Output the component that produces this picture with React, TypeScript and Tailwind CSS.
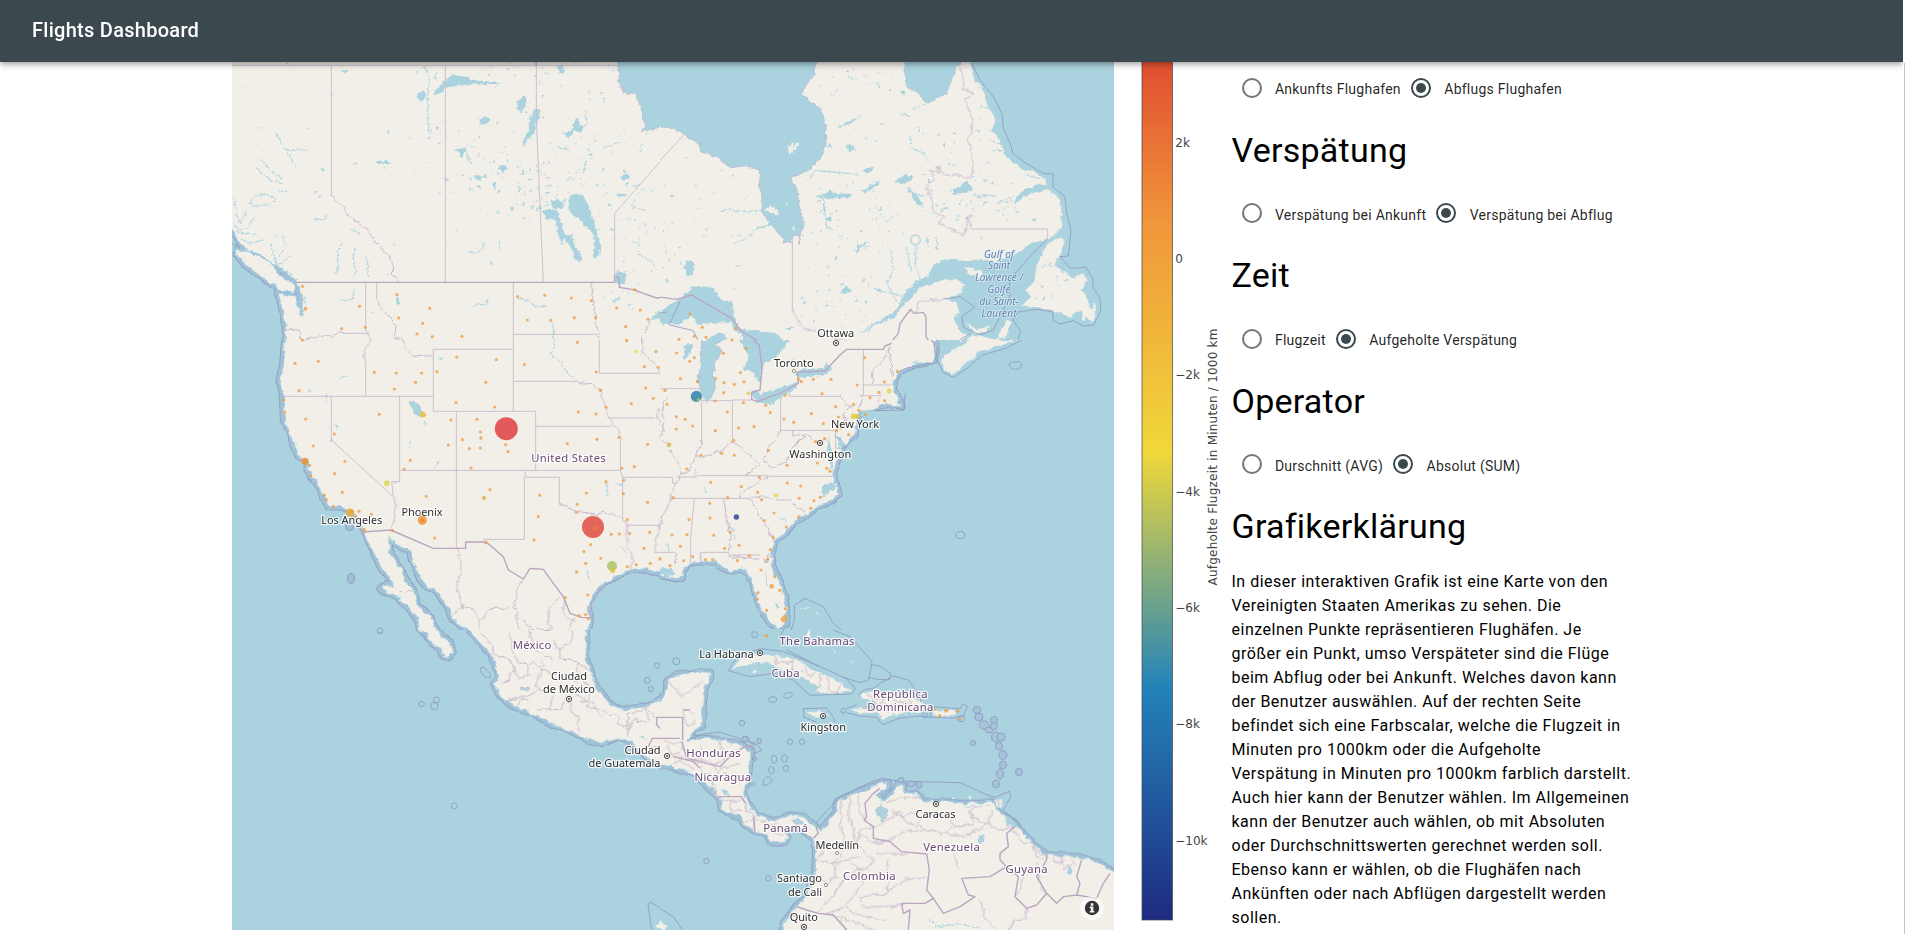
import React from "react";

type Tile = {
  x: number;
  y: number;
  land: string[];
  islands: string[];
  inland: string[];
  lines: string[];
  rivers: string[];
  wobbly: string[];
  straight: string[];
  national: string[];
  dots: string;
};

// The map is split into six tiles, three units per pixel.
const TILES: Tile[] = [
  {
    x: 220, y: 50,
    land: [
      "M-60-60H1400V960H197L197 870 196 830 188 790 180 750 172 728 200 738 228 742 238 790 246 796 248 750 240 725 232 700 215 680 190 660 160 642 120 612 80 600 62 585 50 560 36 540-60 500Z",
      "M50 600L80 602 120 620 150 637 165 655 180 680 210 692 226 710 220 730 190 722 160 705 110 670 70 640 50 615Z",
    ],
    islands: [],
    inland: [
      "M1196-60V60L1200 100 1210 130 1250 130 1256 150 1264 190 1275 222 1268 245 1300 236 1350 228 1400 220V-60Z",
      "M638 138L650 118 672 92 700 74 735 80 765 92 825 95 845 102 800 102 740 104 712 108 680 112 660 130Z",
      "M592 130L612 124 616 140 606 158 594 146Z",
      "M778 212L800 198 812 208 796 222 784 224Z",
      "M890 158L905 140 920 142 916 166 904 188 894 178Z",
      "M928 210L942 178 960 176 958 204 948 222 944 248 930 262 908 288 912 262 926 244Z",
      "M1034 252L1056 236 1068 204 1080 212 1078 232 1100 222 1082 246 1062 244 1046 266Z",
      "M704 298L722 296 738 290 736 308 724 322 718 306Z",
      "M470 336L500 332 514 342 474 342Z",
      "M836 354L850 344 866 354 848 368Z",
      "M760 376L790 378 786 390 764 388Z",
      "M1044 470L1050 436 1068 430 1090 436 1106 470 1118 506 1132 548 1142 580 1138 618 1122 626 1120 590 1126 570 1110 540 1096 528 1080 508 1062 500Z",
      "M990 452L1010 448 1030 462 1026 474 1000 476Z",
      "M966 482L990 476 1012 484 1022 512 1034 556 1056 556 1064 590 1082 612 1084 634 1066 630 1056 600 1046 582 1030 562 1028 584 1012 548 1008 516 990 500 984 514Z",
      "M1200 380L1222 372 1232 380 1210 392Z",
      "M1184 680L1196 664 1220 672 1218 690 1204 708 1186 694Z",
      "M1180 744L1204 740 1196 752 1180 756Z",
      "M1288 812L1308 790 1335 768 1400 750V850L1335 812 1310 806Z",
      "M528 745L538 748 538 764 530 764Z",
      "M360 60L386 60 382 70 368 66Z",
      "M1190 428L1222 434 1206 442 1190 436Z",
      "M1012 50L1028 38 1032 70 1018 72Z",
      "M940 36L955 38 950 52Z",
      "M818 402L828 396 824 420Z",
      "M806 636L820 640 812 646Z",
    ],
    lines: ["M36 580L60 592"],
    rivers: [
      "M165 248L192 292 212 322 228 352M200 302L236 298 260 302",
      "M110 352L135 380 160 394 188 398M122 326L150 362 186 384",
      "M88 460L106 438 138 432 168 446 152 464 110 468 88 460M176 424L200 424",
      "M40 524L60 540 84 530 104 500M46 490L62 520 80 480M50 545L84 552 112 556M60 566L90 580 130 570M40 440L50 480",
      "M165 640L180 660 206 668 232 690M150 580L168 640 190 600M172 648L210 620",
      "M240 726L244 748 238 770 250 786M252 740L258 768M236 790L250 792",
      "M368 578L352 610 355 650 346 672M404 596L400 630 408 660 400 680M438 616L444 660 442 684",
      "M742 606L770 610 798 584M786 578L790 590M838 570V598M746 774L770 762 802 766 800 750",
      "M896 744L930 754 940 768 980 770M1000 818V856L1008 900M404 712L396 750 360 752",
      "M614 46L628 90 622 150 626 250M650 66L640 90M282 506L310 510 320 496",
      "M450 780L462 790M185 556L198 586M390 536L424 552M840 98L820 118M1230 464L1272 480M1150 294L1200 276M1252 612L1296 634",
      "M1050 300L1010 290M1100 330L1090 370M740 310L752 340M1240 576L1262 584",
    ],
    wobbly: [
      "M334 434L345 454 372 470 390 505 420 520 445 545 470 578 496 606 516 632 518 672 536 696",
      "M196 838L235 840 248 870 300 860 370 850",
      "M440 850L455 866 446 890 440 900",
      "M470 745L485 775 525 820 522 866 545 868 560 900",
      "M1115 700L1118 745 1124 780 1128 820 1136 850 1138 900",
      "M1288 812L1280 845 1265 862 1262 900",
      "M199 36L204 44",
    ],
    straight: [
      "M36 46H1196M334 46V434M676 46V697M949 36V210L970 697M1184 697V490L1360 290M437 697V832L440 850H370M470 697V745M880 697V900M880 853H1135M640 898H880",
    ],
    national: ["M230 697H1184V680L1196 682 1198 712 1244 720 1270 730 1310 744 1360 742"],
    dots: "248,709 531,734 419,769 629,775 536,804 608,820 365,836 436,832 591,852 637,860 726,859 247,870 893,740 974,736 1054,744 1114,752 922,810 992,811 1063,803 1127,803 1190,774 1261,780 1244,719 1284,808 1217,830 1220,871 256,776,6",
  },
  {
    x: 660, y: 50,
    land: [],
    islands: [
      "M-60-60H925L930 37 945 80 975 130 978 160 1008 205 998 240 1024 280 1040 320 1080 350 1120 366 1160 385 1165 402 1120 408 1080 430 1060 462 1110 430 1160 418 1180 430 1205 450 1208 480 1205 530 1190 550 1165 566 1120 580 1080 605 1040 625 1000 632 900 630 850 632 820 645 808 680 770 692 740 725 700 790 650 818 620 845 640 826 700 804 735 760 780 715 840 690 890 686 915 700 905 725 860 748 895 760 896 785 886 810 900 840 924 858 905 880 880 900 860 960H-60Z",
      "M1200 560L1215 575 1200 610 1182 650 1215 665 1235 684 1270 672 1285 690 1265 720 1282 738 1296 780 1302 750 1310 790 1295 820 1280 800 1265 822 1262 780 1230 802 1200 790 1150 775 1085 768 1112 740 1095 720 1120 700 1130 650 1150 600 1180 565Z",
      "M912 652L960 660 988 682 960 686 930 672Z",
      "M915 812L950 836 992 828 980 850 940 846Z",
      "M1040 808L1056 815 1040 860 1008 870 1025 830Z",
      "M850 905L900 884 940 852 1000 866 1040 872 1060 860 1040 890 1000 960H840Z",
    ],
    inland: [
      "M-60-60V222L0 228 30 235 72 252 110 280 125 300 170 325 210 350 260 352 302 360 298 400 306 440 302 480 330 520 360 555 375 578 390 580 400 560 418 552 418 580 422 550 430 515 418 470 412 420 398 390 392 382 440 365 480 330 498 290 496 220 480 175 430 135 435 110 460 75 470 37V-60Z",
      "M735-60V60L738 100 745 114 780 130 790 150 806 160 830 145 860 130 878 80 885 60 900 37V-60Z",
      "M-10 800L20 770 60 746 100 710 160 710 180 748 215 755 225 800 236 835 290 842 350 850 370 870 410 910H260L250 860 225 842 215 815 150 820 110 822 100 800 78 806 60 824-10 820Z",
      "M120 880L150 862 175 850 190 850 200 870 180 885 170 910H110Z",
      "M72 650L82 630 100 634 104 660 92 678 76 670Z",
      "M604 366L620 354 646 352 630 366Z",
      "M464 440L500 430 510 418 520 430 576 432 570 442 500 446Z",
      "M604 424L640 400 662 394 650 408 614 430Z",
      "M706 396L730 376 760 378 752 394 724 402Z",
      "M738 410L768 430 790 470 770 460Z",
      "M878 418L900 412 918 392 940 418 920 428 880 432Z",
      "M556 288L580 284 586 298 570 304Z",
      "M640 714L660 714 658 726Z",
      "M530 234L560 216 606 196 570 222Z",
      "M560 78L600 90 566 84Z",
      "M586 612L596 586 626 574 606 590Z",
      "M722 120L740 124 728 136Z",
      "M500 290L508 278 516 292Z",
      "M495 508L512 500 510 516Z",
      "M540 724L560 708 574 722 556 734Z",
      "M376 836L398 832 394 842Z",
      "M26 434L44 436 40 442Z",
    ],
    lines: [
      "M935 40L960 90 1000 140 1026 190 1030 235 1050 280 1060 312 1095 338 1150 370 1180 372 1178 410 1215 440 1220 490 1233 540 1225 618 1200 620 1232 655 1278 652 1300 690 1298 710 1320 745 1322 785 1300 825 1270 828 1240 812 1200 822 1180 812 1178 785 1130 778 1075 786 1058 810 1082 842 1074 868 1040 900",
      "M850 747L900 740 945 772 905 800 910 832 960 855 1000 840 1020 800 1050 740 1048 690 1110 620 1163 565",
      "M30 820L60 755M0 790L20 786M25 824L100 842 118 880M860 896L930 850",
    ],
    rivers: [
      "M180 490L196 478 260 486 300 480M220 580L250 570 300 530 330 526M440 390L470 362 540 368 600 374",
      "M490 460L500 530 520 540M490 446L496 500M750 260L752 290 790 310 806 332M750 180L800 160M720 190L752 200",
      "M768 590L766 640 780 690M740 590L752 660M690 600L700 660 680 700 720 770M650 720L700 732 730 740",
      "M600 850L640 826 690 804M1010 460L1060 440M940 440L1000 436M800 560L806 590M370 70L384 56M772 230L788 252M650 96L660 118M510 134L526 134M830 600V560",
      "M960 170L1000 180M985 240L1030 246M990 270L1040 290M1060 340L1090 350M950 110L970 118M1000 300L1040 304M1090 372L1140 386",
    ],
    wobbly: [
      "M895 37L905 60 912 110 900 118 940 128 915 150 930 190 940 210 925 270 940 330 935 385 880 375 850 370 832 347 838 370 812 360 820 390 798 410 815 450 820 480 850 500 840 520 880 540 912 556 925 500 945 495 925 510 935 537",
      "M397 780L430 835 470 845 500 862 570 872 566 898",
      "M765 785L780 755 850 747",
    ],
    straight: ["M397 560V780M935 537H1163V565M-10 342L74 252"],
    national: ["M-10 740L50 748 95 735 215 805 245 845 290 870 297 900M550 898H670L690 880 715 850 720 820 752 778 762 790 790 787 798 800V860L825 900"],
    dots: "90,792 127,832 228,836 103,859 57,868 138,862 216,870",
  },
  {
    x: 220, y: 340,
    land: [
      "M196-60L195 0 190 60 181 130 192 180 194 240 216 300 238 350 264 362 262 390 285 420 310 470 330 500 365 500 395 515 420 545 432 575 444 605 462 640 490 690 526 740 500 735 482 742 500 758 530 772 566 800 594 840 602 880 620 905 700 905 660 900 650 870 632 830 592 795 580 750 556 720 538 680 512 640 508 590 515 605 570 630 575 660 605 720 620 740 648 750 690 810 698 835 745 875 780 960H1095L1100 900 1110 840 1106 790 1130 745 1190 705 1240 688 1290 690 1330 702 1400 705V-60Z",
    ],
    islands: [],
    inland: [
      "M570 186L582 184 600 202 606 216 616 232 600 226 584 218 576 204Z",
      "M570 186L582 184 600 202 606 216 616 232 600 226 584 218 576 204Z",
      "M332 292L338 298 334 306Z",
      "M346 248L354 258 350 268Z",
      "M612 240L618 248 614 256Z",
      "M264 146L272 150 268 158Z",
      "M590 710L600 712 598 720Z",
      "M656 50L666 54 662 64Z",
    ],
    lines: [],
    rivers: [
      "M1000-10L1004 24 990 40 1020 64 1034 90 1070 124M360 112L380 108M320 160V184M640 384L662 360M570 300V320",
      "M1160 430L1164 470M1190 430L1210 440M1110 520L1130 526M1204 620L1220 640M1100 690L1108 720",
      "M300 536L380 560M400 520L420 540",
    ],
    wobbly: [
      "M446 0L432 50 437 70M545 0L560 30 580 50 610 45 640 50",
      "M1070 124L1085 132 1120 130 1140 150 1155 190 1165 232 1195 270 1201 300",
      "M1018 493L1040 500 1070 515 1120 520 1180 522 1205 535 1222 545V620L1238 650 1230 690",
      "M520 470L530 500 520 550 512 570M530 430L515 430",
      "M1265 0L1270 40 1315 85 1320 110 1345 155 1345 180 1310 220 1322 260 1350 310",
      "M1330 480L1318 560 1308 600 1305 637",
      "M715 625L722 690 710 740 725 800 760 810 780 850 775 900M700 820L735 795M780 845L810 805 885 805 895 850 905 900M885 800L890 750 910 717M905 840L940 870 990 868M1060 835L1040 880 1060 900M1020 770L990 800 985 850 1010 890M1035 775L1030 820 1065 850",
      "M920 900L930 870 980 880 1000 900M538 755H578",
      "M1110 832L1118 780 1150 742",
    ],
    straight: [
      "M190 169H640M437 70V169M640 28V214M640 28H880M880-10V214M640 214H947V391M709 214V625M539 169V425H515L520 470M539 391H1201M880 124H1070M947 259H1175M1201 300V391M334 169V300L520 470M916 391V412H1018V493M913 412V598H790M1201 391L1208 412V535M1205 412H1330M1222 556H1320M1165 234H1305M1138 0V100H1320M1305 637H1350",
    ],
    national: ["M430 576L512 570 640 625H737V606H790L806 612 850 650 865 690 910 717 930 685 970 688 1000 730 1030 770 1050 820 1085 832 1120 833"],
    dots: "225,70 295,64 463,97 529,99 605,99 587,127 651,95 710,51 829,59 797,127 523,147 237,152 191,180 194,216 257,237 478,223 343,282 280,318 708,188 824,201 693,240 771,238 781,276 783,294,5 727,299 748,326 781,324 685,315 857,314 864,335 753,384 571,361 553,387 375,364 269,376 272,408 344,401 367,457 313,465 319,479 340,499 417,514 454,523 408,530 432,570,6 518,572 619,469 810,449 792,474,6 959,466 955,530 942,600 798,606 644,594 913,74 1072,7 1220,2 1308,35 1315,82 1273,80 1129,96 1141,151 1158,202 1128,222 1075,216 1131,298 1042,311 1277,144 1300,175 1234,191 1335,151 1197,292 1283,313 1205,385 1243,380 1211,421 1158,425 1210,461 1099,459 1072,493 1069,517 1283,487 1222,539 1289,577 1229,580 1198,582 1174,583 1112,614 1272,625 1142,655 1092,635 1097,670,5 1070,696,5 1222,680 1249,674 1291,670 1319,657 1036,773 1103,765 1077,827 1097,824 1105,836 995,351 1105,364",
  },
  {
    x: 660, y: 340,
    land: [
      "M-60-60H850L822 0 828 30 820 64 760 75 715 98 704 120 698 150 712 165 718 185 722 200 700 196 680 192 640 205 590 225 592 250 580 285 556 312 540 295 524 285 545 330 528 370 518 400 530 440 536 462 500 490 470 500 440 525 412 535 378 575 345 600 334 640 334 670 355 720 372 765 378 800 376 850 356 866 332 850 300 800 288 770 280 730 265 700 240 685 210 695 190 680 165 665 110 665 85 672 68 690 70 710 50 716 0 705-60 700Z",
    ],
    islands: [
      "M840 60L870 30 920 10 960-60H1110L1080 0 1040 12 960 38 915 75 878 106 852 90Z",
    ],
    inland: [
      "M128-10L122 60 116 120 122 160 138 184 156 178 166 140 160 100 168 60 184 30 170 14 200-10Z",
      "M225-20L250 20 268 55 250 90 278 96 285 112 300 128 312 70 350 50 374 20 400-20Z",
      "M270 152L290 150 300 162 340 150 400 130 420 122 405 145 365 172 330 196 290 186Z",
      "M405 100L430 86 490 84 500 66 518 82 500 102 450 110 415 112Z",
      "M498 250L506 290 502 330 512 380 506 390 520 384 512 320Z",
      "M482 440L520 428 530 444 500 460 488 474Z",
      "M532 292L552 312 540 330Z",
      "M595 232L640 222 690 205 650 212 612 214Z",
      "M346 792L354 788 358 800 350 804Z",
      "M72 14L100 12 84 50 70 60Z",
      "M755 66L775 64 765 74Z",
      "M-10 690L20 680 50 700 20 712Z",
    ],
    lines: [
      "M832 60L848 96 880 112 925 82 965 46 1040 24 1085 0M827 60L832 20",
      "M710 98L740 84 820 68M735 160L732 210 640 212",
      "M403 796L435 775 490 800 520 850 570 892M403 796V840L385 895 315 895 300 880 330 876M888 585A13 11 0 1 1 914 585A13 11 0 1 1 888 585M1048 76C1050 60 1064 68 1070 66C1084 60 1090 76 1080 84C1068 92 1050 88 1048 76M273 884A10 9 0 1 1 293 884A10 9 0 1 1 273 884",
    ],
    rivers: [
      "M355 530L380 546M104 385L106 410M316 695L322 740M130 440L140 460M400 60L402 54",
      "M20 610L30 640M120 640L126 664M216 560L226 600",
    ],
    wobbly: [
      "M125 300L110 350 122 352 180 335 217 305 240 320 300 372 260 405M60 395L75 400 100 365 108 350",
      "M362 270L345 300 320 330 310 365 340 382 375 365 400 320 440 280 400 290 397 272M440 280L465 305",
      "M540 168L575 205M570 200L550 222 560 250 530 271",
      "M325 409L290 430 250 450 232 475M265 480L300 468 350 480M395 485L435 525M270 480L310 540 340 600",
      "M190 475L200 530 210 590 205 640M310 655L316 668 322 645 332 650",
      "M20 170L5 215 15 250 0 290 30 330 55 370 65 392 55 420 40 440 35 475 10 520 0 570",
      "M690 28L670 60 640 90 635 135M690 20L697 110M658 167V190M603 167L600 210",
      "M300 655L205 650M45 637L50 665",
    ],
    straight: [
      "M0 146H138M125 182V300M125 182H217M217 182V305M217 180H275M362 170V271M362 271H530M388 150V169H540M527 271V325H548M110 407H322V418M50 411H110M325 409H520M40 475H270M350 480H395M103 475L92 590V668M0 637H45M122 668V637H205M205 645H300M610 28V165M610 135H695M600 167H665M0 411L38 413V430H52",
    ],
    national: ["M280 0L297 14 306 80 300 150 275 158 275 178 290 185 360 160 415 130 412 96 495 93 540 45 560 28H670L675 18 695 10M805-10L822 10 826 40"],
    dots: "50,39 103,53 89,64 190,40 258,25 241,98 167,116 192,128 223,133 252,125 191,158 61,116 112,125 15,151 21,193 165,183 250,188 317,196 331,218 202,216 49,230 76,238 98,258 49,267 166,272 236,264 282,260 372,237 401,247 454,221 490,251 527,200 581,193 486,161 513,118 460,118 424,125 416,118,5 375,166 592,135 614,53 712,93 673,126 657,157 674,182 630,173 596,211 616,224 535,231 556,248 543,264 530,272 566,284 494,296,5 467,305,5 221,301 185,340 223,346 123,346 325,331 381,376 472,369 500,385 510,394 80,387 152,427 298,412 244,440 293,457 305,479 382,429 422,438 418,475 462,482 481,472 452,505 417,530 342,519 313,542 203,473 40,473 149,490 150,534 87,539 36,585 81,584 161,586 211,577 379,561 340,593 331,629 237,616 194,625 268,647 323,658 232,662 61,619 71,662 98,650 136,659 158,659 0,656 30,677 303,690 344,710 359,751 294,758 292,778 320,811 376,806 335,739,7 371,838,9 375,830,6 319,887",
  },
  {
    x: 220, y: 630,
    land: [
      "M745-60L748 0 775 30 812 70 826 105 836 140 822 160 838 195 880 228 940 252 1000 284 1060 308 1100 328 1145 340 1190 322 1230 334 1270 372 1320 404 1400 410V90L1350 130 1338 165 1328 205 1280 230 1210 240 1165 220 1130 175 1115 130 1098 90V-60Z",
      "M560-60L600 0 620 12 640 42 664 56 670 78 684 82 698 66 690 40 664 20 655 0 650-60Z",
    ],
    islands: ["M1306 884L1320 876 1326 892 1312 898Z", "M1340 860L1346 872 1338 870Z"],
    inland: [
      "M900 174L928 176 920 184Z",
      "M900 174L928 176 920 184Z",
      "M1258 320L1270 318 1282 330Z",
    ],
    lines: [
      "M1296 910L1284 822 1292 816 1360 860M472 3A8 8 0 1 0 488 3M597 222A8 8 0 1 1 613 222A8 8 0 1 1 597 222M632 228A11 11 0 1 1 654 228A11 11 0 1 1 632 228M640 210A9 9 0 1 1 658 210A9 9 0 1 1 640 210M694 528A9 9 0 1 1 712 528A9 9 0 1 1 694 528M782 116C786 106 796 114 810 130C816 146 802 146 792 138C784 130 780 122 782 116",
      "M1303 107A8 8 0 1 1 1319 107A8 8 0 1 1 1303 107M1273 151A9 9 0 1 1 1291 151A9 9 0 1 1 1273 151M1284 177A8 8 0 1 1 1300 177A8 8 0 1 1 1284 177",
    ],
    rivers: ["M1130 244L1150 262"],
    wobbly: [
      "M780 10L805 30 825 75 870 90 880 120 865 150 838 158M870 0L875 60 900 100 925 105 940 95 965 120 1000 130 1040 130M925 0L945 60 990 80 1000 95M960 90L972 105 965 120 945 170 960 180 1000 190 990 235",
      "M1060 0L1055 40 1015 60 1020 85 1075 97 1105 120M1000 30L1015 60M880 120L900 145 925 135 920 108M865 215L890 205 925 195 960 180M890 230L905 205 925 210M950 240L990 235 1020 240 1032 220 1048 220 1060 250 1080 260 1070 285 1082 310",
      "M1075 97L1070 130 1090 150 1110 180 1100 230 1140 240 1190 260 1195 285 1225 285 1220 250M1100 230L1115 215 1130 240M1220 250L1260 245 1285 232M1225 285L1222 322M1225 300L1245 262 1255 275 1290 270 1275 235M1040 130L1046 150 1075 160M1060 195L1080 195 1098 210 1080 215M1285 240L1310 262",
    ],
    straight: ["M1330 330V404M1300 350H1350"],
    national: ["M1350 262H1310V285L1345 320 1340 325H1297L1285 350"],
    dots: "",
  },
  {
    x: 660, y: 630,
    land: [
      "M-60 260L0 218 16 190 22 150 50 136 120 125 150 128 142 160 130 185 128 240 124 288 100 300 82 332 140 325 190 333 245 345 275 366 268 400 264 440 250 490 265 522 290 555 340 574 390 556 430 560 465 592 485 606 505 575 530 545 536 512 580 495 620 480 660 458 682 460 680 475 650 492 665 520 700 490 712 465 730 465 730 488 770 490 790 515 850 515 910 522 1000 518 1010 540 1040 560 1068 590 1115 632 1110 640 1160 675 1250 680 1310 695 1362 730 1460 780V960H355L370 880 410 830 440 800 465 740 468 660 458 625 430 602 410 590 370 600 385 620 375 636 330 634 320 612 285 602 250 580 245 560 185 540 180 505 140 465 100 430 40 410-60 400Z",
    ],
    islands: [
      "M820 240L885 238 886 254 850 260 818 256Z",
      "M436 246L480 240 508 254 495 266 460 262Z",
      "M215 115L240 86 290 72 360 75 420 95 450 115 500 135 550 165 580 184 520 192 460 188 480 172 440 150 400 140 350 108 300 98 240 110Z",
      "M600 192L640 182 700 185 760 200 800 225 814 240 750 250 690 255 670 276 655 250 600 250 565 240 600 230 650 238 640 215 602 202Z",
      "M272 120L290 114 290 128 276 128Z",
      "M432 26L446 0 452 24Z",
      "M915 530L920 518 1000 514 990 526Z",
      "M1006 510L1024 506 1026 534 1008 532Z",
      "M600 158L616 140 606 152Z",
      "M0 870L20 888 10 904-5 890Z",
    ],
    inland: [
      "M652 538L662 524 676 534 684 552 668 572 654 556Z",
      "M956 618L974 612 972 634 958 642Z",
      "M182 474L206 488 208 500 190 490Z",
      "M1224 712L1236 706 1234 734 1224 734Z",
      "M1035 555L1060 575 1070 592 1040 585Z",
      "M395 570L420 566 440 585 400 580Z",
    ],
    lines: [
      "M205 122L235 78 300 56 370 64 480 110 560 146 586 176 575 192 450 196 400 150 340 130 270 140 205 122",
      "M372 0L356 22M480 110L380 60M520 0L570 20 636 94 626 150 600 158 550 142M632 104L660 108 692 130 688 150 650 148 626 142",
      "M595 195L615 178 640 176 660 160 700 138 745 150 782 200 782 215M560 236L590 224M560 248L600 258 650 262 668 284 720 264 780 258 812 262 880 264 912 256 922 228 908 222 900 236 812 230 812 262M430 236L500 234 520 262 524 276M430 236L432 262 470 276",
      "M90 328L130 312 180 306 240 326 290 344 306 360 280 372M262 320L275 340 285 336M470 576L540 500 620 462 665 445 710 452 740 454 900 458 985 496 1005 502 1048 484 1052 500 1030 540 1080 584",
      "M-10 830L40 860 70 905",
      "M39 94A10 11 0 1 1 59 94A10 11 0 1 1 39 94M325 209C325 198 350 198 350 208C350 220 325 220 325 209M371 198C372 188 394 182 397 194C396 204 372 210 371 198M238 279A8 8 0 1 1 254 279A8 8 0 1 1 238 279M382 335A8 8 0 1 1 398 335A8 8 0 1 1 382 335M418 335A8 8 0 1 1 434 335A8 8 0 1 1 418 335",
      "M334 388A8 12 0 1 1 350 388A8 12 0 1 1 334 388M365 386A9 11 0 1 1 383 386A9 11 0 1 1 365 386M326 420A8 11 0 1 1 342 420A8 11 0 1 1 326 420M370 415A8 9 0 1 1 386 415A8 9 0 1 1 370 415M310 456C312 440 328 436 336 448C338 458 320 468 310 466ZM272 462A6 6 0 1 1 284 462A6 6 0 1 1 272 462M280 386A5 5 0 1 1 290 386A5 5 0 1 1 280 386",
      "M131 693A8 8 0 1 1 147 693A8 8 0 1 1 131 693M317 745A8 8 0 1 1 333 745A8 8 0 1 1 317 745M275 14A9 9 0 1 1 293 14A9 9 0 1 1 275 14M543 242A7 7 0 1 1 557 242A7 7 0 1 1 543 242M786 256A8 7 0 1 1 802 256A8 7 0 1 1 786 256M891 267A12 8 0 1 1 915 267A12 8 0 1 1 891 267",
    ],
    rivers: ["M800 860L830 890 900 882 960 895M150 450L170 470"],
    wobbly: [
      "M25 155L66 200 130 155M68 240L80 290 110 270M90 240L100 255",
      "M10 330L40 345 60 335M20 350L45 380 70 385M30 370L60 372M60 330L68 360 105 382 140 390 160 405 190 390 215 375 250 350M120 340L130 365 150 375M180 335L185 360 215 375M205 330L215 345M100 395L125 400M40 400L60 390 75 400 100 420M125 405L130 430 165 440M160 405L180 440 200 430M175 420L240 400",
      "M155 470L170 500 210 515 245 510M210 515L215 545 245 540M250 510L262 540 285 560 280 600M255 575L280 570M290 570L320 575 330 590 350 580M340 610L370 615M395 560L420 590",
      "M545 510L540 580 555 620 540 680 520 700M570 500L565 560 585 600 580 660M595 495L600 540 615 570M640 590L600 600 590 640 620 670 640 690 625 720 590 715 570 740 545 760 520 800M530 640L560 660 600 650M520 700L560 690 600 680M570 700L600 720 610 760 580 800 540 840 500 850M480 690L520 700 530 740 500 760 480 740M500 640L480 680 470 690M560 740L530 780 500 820 470 850",
      "M680 520L720 500 750 505 780 500M690 545L730 560 790 540M640 590L680 570 720 545 740 580 770 590M770 580L800 550 860 555 885 590 850 610 790 600 770 580M640 640L690 630 740 600 790 605M850 610L920 620 985 580M885 590L940 580 930 540 960 530M930 560L985 585 1020 600 1065 590M985 580L1000 540",
      "M650 670L720 672 740 668M685 690V790L600 800 610 830 700 830 740 820M685 785L740 745 800 745M860 640L900 720M510 850L560 870 600 880 640 900M540 870L560 900M560 830L600 860 680 870M960 810L975 860 1010 900M1050 905L1060 870H1100V835M640 640L600 610",
      "M1060 600L1090 640 1115 640M1115 640L1130 680 1150 690M1120 650L1140 670 1165 680M1180 680L1185 700 1215 690M1205 680L1210 720 1240 700M1230 685L1250 700M1090 740L1070 800M1130 700L1140 760 1160 800",
      "M340 70L350 100 400 95M400 90L395 130 430 125M430 110L450 140 470 130M480 130L480 170M500 140L510 180 540 190M540 160L530 190M620 190L640 210 660 205M665 190L670 220 720 230M690 188L700 210 740 215 750 245M720 195L740 190 760 240M600 235L640 230M660 215L680 245M1016 510V530",
    ],
    straight: [],
    national: [
      "M0 262H68V330M68 240L90 240M0 325H60M66 335L80 385 105 390 140 400 180 410 215 375 255 350 285 345M40 380L100 395 120 415",
      "M175 500H245L255 520M280 560L285 605M468 590L475 610 460 625",
      "M660 475L640 490 615 520 620 560 612 570 640 590 640 625 690 635 725 665 800 672 808 720 800 780 820 805",
      "M905 745L990 740 1040 710 1020 690 1020 670 1045 650 1040 610 1065 590M1040 710L1075 740 1065 800 1100 835 1130 825 1160 790 1130 740 1160 690V675M1160 790L1190 820 1210 800 1250 795 1260 760 1250 740 1265 690M1250 795L1310 805 1330 760 1350 730",
      "M905 745L925 795 945 800 900 830 850 850 820 805 795 820 725 820 730 850 750 840 745 900M410 830L440 840 475 850 520 855 560 900M380 850L410 860",
    ],
    dots: "319,17 839,257 858,242,6 893,244,5 900,267 822,238",
  },
];

// Hot spots: x, y, radius in pixels and fill.
const BUBBLES: [number, number, number, string][] = [
  [506.3, 428.7, 11.5, "#df3f41"],
  [593, 527, 11, "#e14b41"],
  [595, 528, 2.6, "#ec7740"],
  [305, 461.3, 3.6, "#ee9038"],
  [350, 512.6, 4.2, "#efae36"],
  [352, 511, 1.6, "#e0a030"],
  [422.3, 520.2, 4.6, "#f0943c"],
  [422.3, 520.2, 1.8, "#ea8434"],
  [386.8, 483.3, 3, "#dcd959"],
  [422.8, 414.6, 3, "#eec23c"],
  [612, 566, 5, "#a9c663"],
  [612.6, 570.8, 2.4, "#eebb3a"],
  [696.4, 396.4, 5.6, "#2a82ad"],
  [698.5, 399.7, 1.8, "#b3c457"],
  [736.4, 517, 2.7, "#33458f"],
  [889, 391, 2.4, "#e4d24a"],
  [853.6, 416.3, 2.9, "#e6c93c"],
  [857, 416.3, 2.4, "#e6c93c"],
  [776, 495.6, 2.1, "#ead24a"],
  [748.4, 393.3, 1.9, "#dfd34e"],
  [669, 444.7, 2.3, "#ddb54a"],
  [636.4, 351.3, 1.9, "#e8df5a"],
];

type Label = [string, number, number, number, "c" | "n" | "s"];
const LABELS: Label[] = [
  ["Ottawa", 835.7, 337, 37, "c"],
  ["Toronto", 793.8, 367, 39.5, "c"],
  ["New York", 855, 428, 48, "c"],
  ["Washington", 820.3, 457.6, 62, "c"],
  ["Los Angeles", 351.8, 524, 61, "c"],
  ["Phoenix", 422, 516, 41, "c"],
  ["United States", 568.5, 462, 74.5, "n"],
  ["México", 532, 648.5, 38.5, "n"],
  ["Ciudad", 569, 679.5, 36, "c"],
  ["de México", 569, 693, 52, "c"],
  ["Ciudad", 642.5, 753.6, 36, "c"],
  ["de Guatemala", 624.5, 767, 72, "c"],
  ["La Habana", 726.5, 657.8, 54.5, "c"],
  ["The Bahamas", 817, 645, 75, "n"],
  ["Cuba", 785.5, 677, 28, "n"],
  ["República", 900.3, 698, 54.5, "n"],
  ["Dominicana", 900.3, 711.3, 66, "n"],
  ["Kingston", 823.2, 731, 45.5, "c"],
  ["Honduras", 713.5, 757.3, 54.5, "n"],
  ["Nicaragua", 722.8, 780.8, 56.5, "n"],
  ["Panamá", 785.5, 832, 44.5, "n"],
  ["Caracas", 935.6, 818.3, 40, "c"],
  ["Medellín", 837.3, 849, 43.5, "c"],
  ["Venezuela", 951.5, 851.4, 56.5, "n"],
  ["Colombia", 869.3, 880, 52.5, "n"],
  ["Guyana", 1026.5, 872.7, 42, "n"],
  ["Santiago", 799.5, 882.4, 45, "c"],
  ["de Cali", 805, 895.5, 34, "c"],
  ["Quito", 803.8, 920.7, 28, "c"],
  ["Gulf of", 999, 257.5, 30, "s"],
  ["Saint", 999, 269.3, 22, "s"],
  ["Lawrence /", 999, 281.4, 48, "s"],
  ["Golfe", 999, 293.4, 23, "s"],
  ["du Saint-", 999, 305.4, 39, "s"],
  ["Laurent", 999, 317.4, 35, "s"],
];

const CAPITALS = [
  [836, 343], [820, 443], [569, 699], [667, 756], [760, 653], [823, 716], [936, 804], [804, 927],
];
const TOWNS = [[794, 371], [837, 853], [826, 885]];

// Small lakes are scattered over the lake districts: x, y, width, height, count.
const DISTRICTS = [
  [440, 110, 90, 90, 50], [480, 160, 70, 60, 60], [535, 70, 60, 120, 50], [590, 130, 60, 110, 44],
  [350, 120, 100, 60, 16], [240, 70, 200, 80, 10], [615, 170, 60, 120, 50], [670, 190, 90, 100, 26],
  [675, 145, 70, 60, 12], [810, 65, 90, 90, 24], [815, 170, 110, 70, 50], [920, 130, 60, 90, 36],
  [925, 190, 60, 50, 30], [800, 230, 100, 80, 50], [800, 300, 70, 35, 20], [975, 120, 30, 90, 26],
  [980, 180, 60, 40, 26], [600, 270, 40, 40, 18], [240, 150, 100, 90, 10], [360, 190, 140, 90, 10],
  [1035, 260, 40, 40, 20], [540, 170, 45, 35, 26], [600, 62, 15, 40, 10], [480, 62, 100, 14, 18],
];
const lakes = (() => {
  let seed = 7;
  const rnd = () => {
    seed = (seed * 16807) % 2147483647;
    return seed / 2147483647;
  };
  return DISTRICTS.flatMap(([x, y, w, h, n]) =>
    Array.from({ length: n }, () => ({
      cx: x + rnd() * w,
      cy: y + rnd() * h,
      rx: 0.4 + rnd() * rnd() * 2.2,
      ry: 0.35 + rnd() * 0.7,
      a: -70 + rnd() * 90,
    })),
  );
})();

const ANTILLES = [
  [977, 710, 4, 3.5], [979, 717, 4, 4], [984, 725, 5, 4], [989, 730, 4, 3], [994, 720, 3.5, 3.5], [994, 726, 3.5, 3.5],
  [996, 737, 4.5, 5], [1001, 737, 4, 4], [999, 746, 3.5, 4], [1003, 755, 4, 4.5], [1003, 765, 3.5, 4],
  [1000, 774, 3.4, 5], [996, 784, 3.5, 4], [1019, 772, 3.4, 4], [973, 743, 2.6, 2.6], [901, 780, 3, 2.6],
  [911, 784, 4, 3], [919, 785, 3, 3.4], [745, 739, 3, 3], [759, 741, 2.4, 2.6],
];

const tileSvg = (t: Tile, i: number, children: React.ReactNode) => (
  <svg key={i} x={t.x} y={t.y} width={440 + (t.x > 600 ? 20 : 0)} height={t.y > 600 ? 304 : 290}
    viewBox={`0 0 ${1320 + (t.x > 600 ? 60 : 0)} ${t.y > 600 ? 912 : 870}`}>
    {children}
  </svg>
);

function FlightMap() {
  return (
    <svg className="block h-[868px] w-[882px] shrink-0 bg-[#aad3df]" viewBox="232 62 882 868">
      <defs>
        <filter id="rough" filterUnits="userSpaceOnUse" x="222" y="52" width="902" height="888" colorInterpolationFilters="sRGB">
          <feTurbulence type="fractalNoise" baseFrequency="0.14" numOctaves="3" seed="4" result="n" />
          <feDisplacementMap in="SourceGraphic" in2="n" scale="6" xChannelSelector="R" yChannelSelector="G" />
        </filter>
        <filter id="gentle" filterUnits="userSpaceOnUse" x="222" y="52" width="902" height="888" colorInterpolationFilters="sRGB">
          <feTurbulence type="fractalNoise" baseFrequency="0.07" numOctaves="1" seed="4" result="n" />
          <feDisplacementMap in="SourceGraphic" in2="n" scale="5" xChannelSelector="R" yChannelSelector="G" />
        </filter>
        <filter id="rougher" filterUnits="userSpaceOnUse" x="222" y="52" width="902" height="888" colorInterpolationFilters="sRGB">
          <feTurbulence type="fractalNoise" baseFrequency="0.3" numOctaves="2" seed="9" result="n" />
          <feDisplacementMap in="SourceGraphic" in2="n" scale="5" xChannelSelector="R" yChannelSelector="G" />
        </filter>
      </defs>
      <g filter="url(#gentle)" strokeLinejoin="round" fill="none">
        {TILES.map((t, i) => tileSvg(t, i, (
          <>
            {t.land.map((d) => <path key={"a" + d} d={d} stroke="#9299bf" strokeWidth="23" />)}
            {t.land.map((d) => <path key={"b" + d} d={d} stroke="#a0c2d8" strokeWidth="18" />)}
          </>
        )))}
      </g>
      <g filter="url(#rough)" strokeLinejoin="round" fill="none">
        {TILES.map((t, i) => tileSvg(t, i, (
          <>
            {t.land.concat(t.islands).map((d) => <path key={d} d={d} fill="#f2efe9" stroke="#a8d0de" strokeWidth="2" />)}
            {t.inland.slice(0, i === 1 ? 2 : 1).map((d) => <path key={d} d={d} fill="#aad3df" stroke="#b7b3cd" strokeWidth="2" />)}
          </>
        )))}
      </g>
      <g filter="url(#rougher)" fill="#aad3df">
        {TILES.map((t, i) => tileSvg(t, i, (
          <>
            {t.inland.slice(1).map((d) => <path key={d} d={d} />)}
            {t.rivers.map((d) => <path key={d} d={d} fill="none" stroke="#aad3df" strokeWidth="3" />)}
          </>
        )))}
        {lakes.map((l, i) => (
          <ellipse key={i} cx={l.cx} cy={l.cy} rx={l.rx} ry={l.ry} transform={`rotate(${l.a} ${l.cx} ${l.cy})`} />
        ))}
        <g fill="#f2efe9">
          <path d="M764 209l6-3 6 2 3 7-6-1zM787 150l5-8 2 2-3 6 6-8 3 1-6 9-4 2zM785 205l2-2 1 3zM792 228l3-1-1 3zM790 121l2 4zM784 75l4-6z" />
          <path d="M800 609l10-2v1l-10 2zM815 610l4 5-1 1zM840 649l6 5M850 662l6-2-4 3zM832 648l4 4-1 1zM951 798h4v1h-4zM968 797l4-2-2 4z" />
        </g>
      </g>
      <g filter="url(#rough)" fill="none" strokeLinejoin="round">
        {TILES.map((t, i) => tileSvg(t, i, (
          <>
            {t.wobbly.map((d) => <path key={d} d={d} stroke="#c6b4c8" strokeWidth="2.8" />)}
          </>
        )))}
      </g>
      <g fill="none" strokeLinejoin="round">
        {TILES.map((t, i) => tileSvg(t, i, (
          <>
            {t.lines.map((d) => <path key={d} d={d} stroke="#8f96bd" strokeWidth="2.4" />)}
            {t.straight.map((d) => <path key={d} d={d} stroke="#c9bccb" strokeWidth="2.8" />)}
            {t.national.map((d) => <path key={d} d={d} stroke="#bba5c0" strokeWidth="4.2" />)}
          </>
        )))}
        {ANTILLES.map(([x, y, a, b], i) => (
          <ellipse key={i} cx={x} cy={y} rx={a} ry={b} fill="#a3c4d9" stroke="#8f96bd" strokeWidth="0.8" />
        ))}
        <g fill="#9fbdd6" stroke="#8f96bd" strokeWidth="0.8">
          <ellipse cx="351" cy="578.5" rx="3.6" ry="5.2" />
          <ellipse cx="349.5" cy="527" rx="4" ry="3.6" />
          <circle cx="380" cy="630.5" r="2.7" fill="none" />
        </g>
        <circle cx="915.5" cy="240" r="4.8" stroke="#aad3df" strokeWidth="1.3" />
      </g>
      <g fill="#ef9a3c" opacity="0.75">
        {TILES.map((t) => t.dots.split(" ").filter(Boolean).map((p, i) => {
          const [x, y, r] = p.split(",").map(Number);
          return <circle key={t.x + "-" + t.y + "-" + i} cx={t.x + x / 3} cy={t.y + y / 3} r={(r || 4.8) / 3} />;
        }))}
      </g>
      <g fill="none">
        {CAPITALS.map(([x, y]) => (
          <g key={x}>
            <circle cx={x} cy={y} r="2.6" stroke="#444" fill="#fff" fillOpacity="0.6" />
            <circle cx={x} cy={y} r="1" fill="#444" />
          </g>
        ))}
        {TOWNS.map(([x, y]) => <circle key={x} cx={x} cy={y} r="1.6" stroke="#777" strokeWidth="0.8" fill="#fff" />)}
      </g>
      <g textAnchor="middle" strokeLinejoin="round" className="font-['Noto_Sans',sans-serif] [paint-order:stroke]">
        {LABELS.map(([text, x, y, len, kind]) => (
          <text
            key={text + y}
            x={x}
            y={y}
            textLength={len}
            fontSize={kind === "n" ? 11.3 : kind === "s" ? 10 : 11}
            fontStyle={kind === "s" ? "italic" : "normal"}
            fill={kind === "n" ? "#6b4a75" : kind === "s" ? "#5b83b5" : "#2b2b2b"}
            stroke={kind === "s" ? "#e3eef3" : "#ffffff"}
            strokeOpacity="0.8"
            strokeWidth={kind === "s" ? 1.6 : 2.6}
          >
            {text}
          </text>
        ))}
      </g>
      {BUBBLES.map(([x, y, r, fill], i) => <circle key={i} cx={x} cy={y} r={r} fill={fill} opacity="0.85" />)}
      <circle cx="1092" cy="908" r="12" fill="#fff" fillOpacity="0.5" />
      <circle cx="1092" cy="908" r="7.2" fill="#333" />
      <path d="M1090.7 903.2h2.7v2.5h-2.7zM1089.8 906.6h3.6v4.4h1v1.6h-4.7v-1.6h1.1v-2.8h-1z" fill="#f5f5f5" />
    </svg>
  );
}

const TICKS: [string, number][] = [
  ["2k", 143], ["0", 259], ["−2k", 375], ["−4k", 492], ["−6k", 608], ["−8k", 724], ["−10k", 841],
];

function ColorScale() {
  return (
    <svg className="block h-[868px] w-[117.5px] shrink-0" viewBox="1114 62 117.5 868">
      <defs>
        <linearGradient id="scale" gradientUnits="userSpaceOnUse" x1="0" y1="920" x2="0" y2="-14">
          <stop offset="0" stopColor="#1e2b80" />
          <stop offset="0.25" stopColor="#2384b9" />
          <stop offset="0.5" stopColor="#f0d83a" />
          <stop offset="0.75" stopColor="#f0953b" />
          <stop offset="1" stopColor="#d92c2b" />
        </linearGradient>
      </defs>
      <rect x="1142" y="40" width="30.5" height="880" fill="url(#scale)" stroke="#444" strokeOpacity="0.7" />
      <g fill="#444" fontSize="12" className="font-['DejaVu_Sans',Verdana,sans-serif]">
        {TICKS.map(([label, y]) => <text key={label} x="1175.3" y={y + 4.3}>{label}</text>)}
        <text transform="translate(1217 585.5) rotate(-90)" textLength="257">
          Aufgeholte Flugzeit in Minuten / 1000 km
        </text>
      </g>
    </svg>
  );
}

function Radio({ label, checked }: { label: string; checked?: boolean }) {
  return (
    <label className="flex items-center">
      <span className="flex size-10 items-center justify-center">
        <span className={checked
          ? "flex size-5 items-center justify-center rounded-full border-2 border-[#3b494f]"
          : "flex size-5 items-center justify-center rounded-full border-2 border-[#757575]"}>
          {checked && <span className="size-2.5 rounded-full bg-[#3b494f]" />}
        </span>
      </span>
      <span className="pt-[2.4px] pl-[3.4px] text-sm leading-5 tracking-[0.25px] text-black/87">{label}</span>
    </label>
  );
}

function Choice({ options }: { options: [string, string] }) {
  return (
    <div className="flex h-10">
      <Radio label={options[0]} />
      <Radio label={options[1]} checked />
    </div>
  );
}

function Heading({ children }: { children: React.ReactNode }) {
  return <h4 className="flex h-[85.5px] items-center pb-[1.4px] text-[34px] leading-10 tracking-[0.25px] text-black">{children}</h4>;
}

export default function App() {
  return (
    <div className="flex h-[934px] overflow-hidden bg-white font-[Roboto,sans-serif]">
      <div className="flex min-w-0 grow flex-col">
        <header className="z-10 flex h-[62px] shrink-0 items-center bg-[#3b494f] px-8 pb-0.5 shadow-[0_2px_4px_-1px_rgba(0,0,0,0.2),0_4px_5px_0_rgba(0,0,0,0.14),0_1px_10px_0_rgba(0,0,0,0.12)]">
          <h1 className="text-xl font-medium tracking-[0.28px] text-white">Flights Dashboard</h1>
        </header>
        <main className="flex pl-[232px]">
          <FlightMap />
          <ColorScale />
          <section className="w-[400px] pt-[5.9px]">
            <Choice options={["Ankunfts Flughafen", "Abflugs Flughafen"]} />
            <Heading>Verspätung</Heading>
            <Choice options={["Verspätung bei Ankunft", "Verspätung bei Abflug"]} />
            <Heading>Zeit</Heading>
            <Choice options={["Flugzeit", "Aufgeholte Verspätung"]} />
            <Heading>Operator</Heading>
            <Choice options={["Durschnitt (AVG)", "Absolut (SUM)"]} />
            <Heading>Grafikerklärung</Heading>
            <p className="text-base leading-6 tracking-[0.5px] text-black">
              In dieser interaktiven Grafik ist eine Karte von den Vereinigten Staaten Amerikas zu sehen. Die einzelnen
              Punkte repräsentieren Flughäfen. Je größer ein Punkt, umso Verspäteter sind die Flüge beim Abflug oder bei
              Ankunft. Welches davon kann der Benutzer auswählen. Auf der rechten Seite befindet sich eine Farbscalar,
              welche die Flugzeit in Minuten pro 1000km oder die Aufgeholte Verspätung in Minuten pro 1000km farblich
              darstellt. Auch hier kann der Benutzer wählen. Im Allgemeinen kann der Benutzer auch wählen, ob mit
              Absoluten oder Durchschnittswerten gerechnet werden soll. Ebenso kann er wählen, ob die Flughäfen nach
              Ankünften oder nach Abflügen dargestellt werden sollen.
            </p>
          </section>
        </main>
      </div>
      <div className="z-20 flex w-[2px] shrink-0 justify-end bg-white pt-[63px]">
        <div className="w-px bg-[#c4c4c4]" />
      </div>
    </div>
  );
}
